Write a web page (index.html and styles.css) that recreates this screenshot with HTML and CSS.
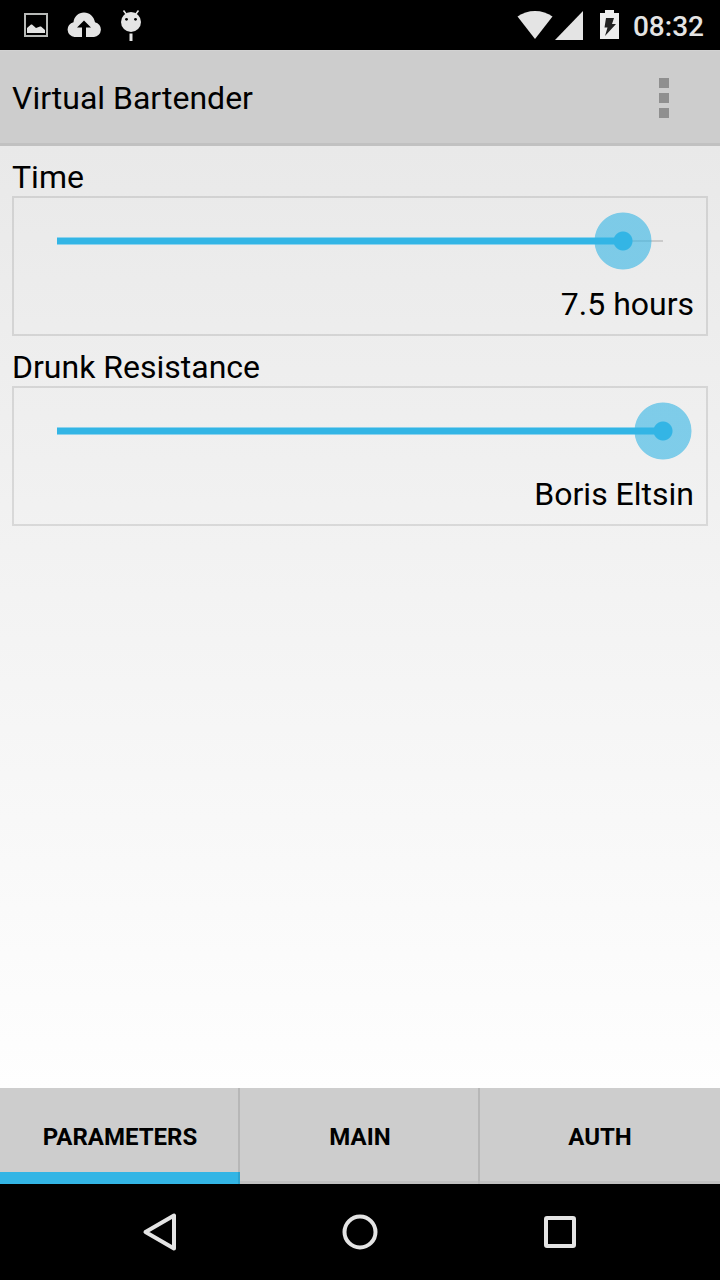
FILE: index.html
```
<!DOCTYPE html>
<html lang="en">
<head>
<meta charset="utf-8">
<meta name="viewport" content="width=device-width, initial-scale=1">
<title>Virtual Bartender</title>
<link rel="stylesheet" href="styles.css">
</head>
<body>
<div class="screen">
  <div class="status-bar">
    <div class="notifications">
      <svg width="24" height="24" viewBox="0 0 24 24" role="img" aria-label="Screenshot saved"><path d="M1 1h22v22H1z" fill="none" stroke="#b8bab8" stroke-width="2"/><path d="M3 20v-5l4-3.500h1l4 3.500 4-1.500h1l4 3.500v3z" fill="#e4e4e4"/></svg>
      <svg width="34" height="26" viewBox="0 0 34 26" role="img" aria-label="Upload finished"><path d="M7.500 25A7.500 7.500 0 0 1 6.500 10.200C7 4.500 11.500.500 17 .500S27 4.500 28 10.200A7.500 7.500 0 0 1 27 25H19V15.500h5L17 8.500l-7 7h5V25z" fill="#e4e4e4"/></svg>
      <svg width="22" height="32" viewBox="0 0 22 32" role="img" aria-label="Android notification"><path d="M3.500 1.500l3 4M18.500 1.500l-3 4" stroke="#e4e4e4" stroke-width="1.600" fill="none"/><circle cx="11" cy="13" r="10" fill="#e4e4e4"/><circle cx="6.500" cy="10.300" r="1.400" fill="#000"/><circle cx="15.500" cy="10.300" r="1.400" fill="#000"/><path d="M9.500 24.500h3V32h-3z" fill="#e4e4e4"/></svg>
    </div>
    <div class="indicators">
      <svg width="36" height="30" viewBox="0 0 36 30" role="img" aria-label="Wi-Fi"><path d="M.500 6.500C10-1 26-1 35.500 6.500L18 29z" fill="#e4e4e4"/></svg>
      <svg width="28" height="30" viewBox="0 0 28 30" role="img" aria-label="Mobile signal"><path d="M28 1v29H0z" fill="#e4e4e4"/></svg>
      <svg class="battery" width="19" height="30" viewBox="0 0 19 30" role="img" aria-label="Battery charging"><path d="M5 0h9v3h5v26H0V3h5z" fill="#eee"/><path d="M6 8h8l-2 6h4L5 26l2.500-8.500H4.500z" fill="#222"/></svg>
      <time class="clock">08:32</time>
    </div>
  </div>

  <header class="app-bar">
    <h1 class="app-title">Virtual Bartender</h1>
    <button class="overflow" type="button" aria-label="More options"><span class="dot"></span><span class="dot"></span><span class="dot"></span></button>
  </header>

  <main class="content">
    <section class="setting">
      <label class="setting-label" for="time">Time</label>
      <div class="setting-box">
        <input class="slider" id="time" type="range" min="0.5" max="8" step="0.5" value="7.5" style="--fill: 0.9333">
        <output class="setting-value" for="time">7.5 hours</output>
      </div>
    </section>
    <section class="setting">
      <label class="setting-label" for="resistance">Drunk Resistance</label>
      <div class="setting-box">
        <input class="slider" id="resistance" type="range" min="0" max="10" value="10" style="--fill: 1">
        <output class="setting-value" for="resistance">Boris Eltsin</output>
      </div>
    </section>
  </main>

  <div class="tabs" role="tablist">
    <button class="tab tab-selected" type="button" role="tab" aria-selected="true">PARAMETERS</button>
    <button class="tab" type="button" role="tab" aria-selected="false">MAIN</button>
    <button class="tab" type="button" role="tab" aria-selected="false">AUTH</button>
  </div>

  <nav class="nav-bar">
    <button class="nav-button" type="button" aria-label="Back"><svg width="40" height="40" viewBox="0 0 40 40"><path d="M34 3.500v33L5.500 20z"/></svg></button>
    <button class="nav-button" type="button" aria-label="Home"><svg width="40" height="40" viewBox="0 0 40 40"><circle cx="20" cy="20" r="15.500"/></svg></button>
    <button class="nav-button" type="button" aria-label="Recent apps"><svg width="40" height="40" viewBox="0 0 40 40"><rect x="6" y="6" width="28" height="28" rx="1"/></svg></button>
  </nav>
</div>
<script src="sliders.js"></script>
</body>
</html>
```
FILE: sliders.js
```
document.querySelectorAll(".slider").forEach(function (slider) {
  slider.addEventListener("input", function () {
    var fill = (slider.value - slider.min) / (slider.max - slider.min);
    slider.style.setProperty("--fill", fill);
    if (slider.id === "time") {
      slider.nextElementSibling.value = slider.value + " hours";
    }
  });
});
```
FILE: styles.css
```
* {
  box-sizing: border-box;
}

body {
  margin: 0;
  font-family: Roboto, "Liberation Sans", sans-serif;
  color: #000;
}

button {
  margin: 0;
  padding: 0;
  border: 0;
  background: none;
  font: inherit;
  color: inherit;
}

svg {
  display: block;
  flex: none;
}

.screen {
  display: flex;
  flex-direction: column;
  min-height: 100vh;
  background: #000;
}

.status-bar {
  display: flex;
  justify-content: space-between;
  align-items: center;
  height: 50px;
  padding: 0 16px 0 24px;
}

.notifications {
  display: flex;
  align-items: center;
  gap: 19px;
}

.indicators {
  display: flex;
  align-items: center;
  gap: 2px;
}

.battery {
  margin: 0 12px 0 15px;
}

.clock {
  padding-top: 3px;
  font-size: 28px;
  font-weight: 500;
  line-height: 32px;
  color: #e4e4e4;
}

.app-bar {
  display: flex;
  justify-content: space-between;
  align-items: center;
  height: 96px;
  padding: 2px 12px 0;
  border-top: 1px solid #d2d2d2;
  border-bottom: 3px solid #c1c1c1;
  background: #cdcdcd;
}

.app-title {
  margin: 0;
  font-size: 32px;
  font-weight: 400;
  line-height: 38px;
}

.overflow {
  display: flex;
  flex-direction: column;
  align-items: center;
  gap: 5px;
  width: 88px;
}

.dot {
  width: 10px;
  height: 10px;
  background: #8f8f8f;
}

.content {
  display: flex;
  flex: 1;
  flex-direction: column;
  gap: 12px;
  padding: 12px;
  background: linear-gradient(#e9e9e9, #fefefe);
}

.setting {
  display: flex;
  flex-direction: column;
  font-size: 32px;
  line-height: 38px;
}

.setting-box {
  display: flex;
  flex-direction: column;
  gap: 13px;
  padding: 12px 12px 11px;
  border: 2px solid rgba(0, 0, 0, 0.1);
}

.setting-value {
  text-align: right;
}

.slider {
  appearance: none;
  -webkit-appearance: none;
  height: 62px;
  margin: 0 2px;
  background:
    linear-gradient(#8dd2ec 1px, #33b5e5 1px 7px, #8dd2ec 7px) 29px 50% / calc((100% - 58px) * var(--fill)) 8px no-repeat,
    linear-gradient(#cbcbcb, #cbcbcb) 50% 50% / calc(100% - 58px) 2px no-repeat;
}

.slider::-webkit-slider-thumb {
  -webkit-appearance: none;
  width: 58px;
  height: 58px;
  border: 0;
  border-radius: 50%;
  background: radial-gradient(circle, #33b5e5 9px, rgba(51, 181, 229, 0.6) 10px 28px, rgba(51, 181, 229, 0) 29px);
}

.tabs {
  display: grid;
  grid-template-columns: repeat(3, 1fr);
  height: 96px;
  background: #cdcdcd;
}

.tab {
  padding: 1px 0 0 2px;
  border-right: 2px solid #b7b7b7;
  font-size: 24px;
  font-weight: 700;
  line-height: 28px;
  box-shadow: inset 0 -3px #c1c1c1;
}

.tab:last-child {
  padding-left: 0;
  border-right: 0;
}

.tab-selected {
  box-shadow: inset 0 -12px #33b5e5;
  border-image: linear-gradient(#b7b7b7 84px, #2ea3ce 84px) 0 2 0 0;
}

.nav-bar {
  display: flex;
  justify-content: center;
  gap: 80px;
  height: 96px;
}

.nav-button {
  display: flex;
  justify-content: center;
  align-items: center;
  width: 120px;
}

.nav-button svg {
  fill: none;
  stroke: #e4e4e4;
  stroke-width: 4;
  stroke-linejoin: round;
}
```
